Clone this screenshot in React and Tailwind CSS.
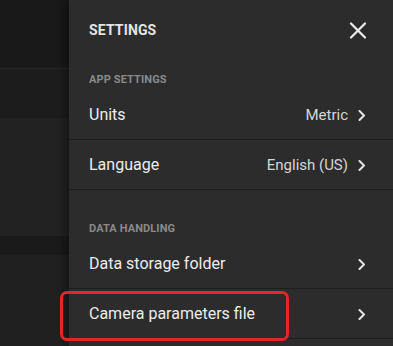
import React from 'react'

// Settings rows, grouped by section
const sections = [
  {
    title: 'APP SETTINGS',
    rows: [
      { label: 'Units', value: 'Metric' },
      { label: 'Language', value: 'English (US)' },
    ],
  },
  {
    title: 'DATA HANDLING',
    rows: [
      { label: 'Data storage folder', value: '' },
      { label: 'Camera parameters file', value: '' },
    ],
  },
]

function Chevron() {
  return (
    <svg width="8" height="11" viewBox="0 0 8 11" fill="none" className="shrink-0">
      <path d="M1.5 1 L6 5.5 L1.5 10" stroke="#e6e6e6" strokeWidth="2" strokeLinecap="round" strokeLinejoin="round" />
    </svg>
  )
}

function CloseIcon() {
  return (
    <svg width="18" height="17" viewBox="0 0 18 17" fill="none">
      <path d="M2 1.5 L16 15.5 M16 1.5 L2 15.5" stroke="#ececec" strokeWidth="2.2" strokeLinecap="round" />
    </svg>
  )
}

export default function App() {
  return (
    <div
      className="relative flex w-[393px] h-[346px] overflow-hidden bg-[#1f1f1f]"
      style={{ fontFamily: 'Roboto, "Noto Sans", sans-serif' }}
    >
      {/* ── BACKGROUND PAGE (dimmed) ─────────────────────────── */}
      <div className="flex flex-col w-[69px] shrink-0">
        <div className="h-[69px] bg-[#191919] border-b border-[#262626]" />
        <div className="h-[49px] bg-[#1c1c1c]" />
        <div className="h-[119px] bg-[#222222] border-b border-[#1a1a1a]" />
        <div className="h-[18px] bg-[#1a1a1a]" />
        <div className="flex-1 bg-[#202020]" />
      </div>

      {/* ── SETTINGS PANEL ───────────────────────────────────── */}
      <div className="flex-1 flex flex-col bg-[#2c2c2c] shadow-[-4px_0_8px_rgba(0,0,0,0.35)]">
        <div className="h-[58px] flex items-center justify-between pt-[2px] pl-5 pr-[26px]">
          <span className="text-[14px] font-bold text-[#e4e4e4] tracking-[0.01em]">SETTINGS</span>
          <CloseIcon />
        </div>

        {sections.map((section, i) => (
          <div key={section.title}>
            <div
              className={`flex items-end pl-5 pb-[3px] ${i === 0 ? 'h-[32px]' : 'h-[49px]'}`}
            >
              <span className="text-[11px] leading-[14px] font-bold text-[#8a8a8a] tracking-[0.01em]">
                {section.title}
              </span>
            </div>
            {section.rows.map((row) => (
              <div
                key={row.label}
                className="h-[50px] flex items-center justify-between pt-[1px] pl-5 pr-[27px] border-b border-[#1e1e1e]"
              >
                <span className="text-[16px] text-[#ececec]">{row.label}</span>
                <div className="flex items-center gap-[10px]">
                  {row.value && <span className="text-[15px] text-[#d6d6d6]">{row.value}</span>}
                  <Chevron />
                </div>
              </div>
            ))}
          </div>
        ))}
      </div>

      {/* ── ANNOTATION HIGHLIGHT ─────────────────────────────── */}
      <div className="absolute left-[60px] top-[291px] w-[229px] h-[50px] border-[3px] border-[#e3262a] rounded-[7px]" />
    </div>
  )
}
